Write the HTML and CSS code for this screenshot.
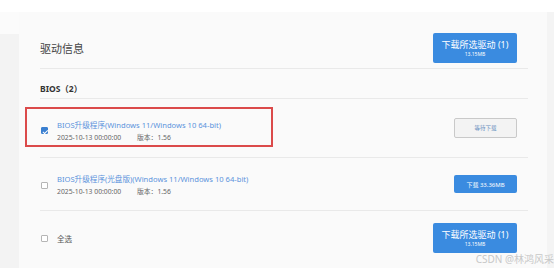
FILE: index.html
```html
<!DOCTYPE html>
<html lang="zh-CN">
<head>
<meta charset="utf-8">
<link rel="stylesheet" href="styles.css">
</head>
<body>
<div class="topbar"></div>
<div class="layout">
  <div class="side"><div class="side-top"></div></div>
  <main class="panel">
    <div class="header">
      <h1 class="title">驱动信息</h1>
      <button class="btn btn-primary btn-big"><span class="big-label">下载所选驱动 (1)</span><span class="big-size">13.15MB</span></button>
    </div>
    <div class="section">BIOS（2）</div>
    <div class="row row1">
      <span class="cb checked"></span>
      <div class="info">
        <a class="name">BIOS升级程序(Windows 11/Windows 10 64-bit)</a>
        <div class="meta"><span class="date">2025-10-13 00:00:00</span><span class="ver">版本：1.56</span></div>
      </div>
      <button class="btn btn-wait">等待下载</button>
    </div>
    <div class="row row2">
      <span class="cb"></span>
      <div class="info">
        <a class="name">BIOS升级程序(光盘版)(Windows 11/Windows 10 64-bit)</a>
        <div class="meta"><span class="date">2025-10-13 00:00:00</span><span class="ver">版本：1.56</span></div>
      </div>
      <button class="btn btn-primary btn-small">下载 33.36MB</button>
    </div>
    <div class="row row3">
      <span class="cb"></span>
      <span class="all">全选</span>
      <button class="btn btn-primary btn-big"><span class="big-label">下载所选驱动 (1)</span><span class="big-size">13.15MB</span></button>
    </div>
    <div class="highlight"></div>
  </main>
  <div class="side-right"></div>
</div>
<div class="watermark">CSDN @林鸿风采</div>
</body>
</html>
```
FILE: styles.css
```css
* { box-sizing: border-box; }
html, body { margin: 0; padding: 0; }
body {
  width: 554px;
  height: 268px;
  overflow: hidden;
  background: #f4f4f4;
  font-family: "Noto Sans", "Noto Sans CJK SC", sans-serif;
  color: #333;
  position: relative;
}
.topbar { height: 12px; background: #ffffff; }
.layout { display: flex; height: 256px; }
.side { width: 19px; background: #f3f3f3; }
.side-top { height: 22px; background: #fbfbfb; }
.side-right { flex: 1; background: #f4f4f4; }
.panel {
  width: 528px;
  background: #fafafa;
  padding: 0 19px 0 21px;
  position: relative;
}
.header {
  display: flex;
  align-items: center;
  justify-content: space-between;
  padding: 21px 11px 5px 0;
  border-bottom: 1px solid #e9e9e9;
}
.title {
  margin: 0;
  font-size: 11px;
  font-weight: normal;
  color: #444;
}
.btn {
  border: none;
  font-family: "Noto Sans", "Noto Sans CJK SC", sans-serif;
  border-radius: 2px;
  padding: 0;
  cursor: pointer;
}
.btn-primary { background: #3a8be0; color: #fff; }
.btn-big {
  width: 84px;
  height: 30px;
  display: flex;
  flex-direction: column;
  align-items: center;
  justify-content: center;
  gap: 1px;
}
.big-label { font-size: 9px; line-height: 11px; }
.big-size { font-size: 5px; line-height: 6px; }
.section {
  height: 30px;
  display: flex;
  align-items: center;
  padding-top: 9px;
  font-size: 8.5px;
  font-weight: bold;
  color: #333;
  border-bottom: 1px solid #e9e9e9;
}
.row {
  display: flex;
  align-items: center;
  padding-right: 11px;
}
.row1 { height: 59px; border-bottom: 1px solid #e9e9e9; }
.row2 { height: 53px; border-bottom: 1px solid #e9e9e9; }
.row3 { height: 54px; }
.row1 .info, .row1 .cb { margin-top: 5px; }
.row2 .info, .row2 .cb { margin-top: 2px; }
.cb {
  width: 7px;
  height: 7px;
  border: 1px solid #b5b5b5;
  background: #fff;
  margin-left: 1px;
  margin-right: 9px;
  border-radius: 1px;
}
.cb.checked {
  background: #3a7fd0;
  border-color: #3a7fd0;
  position: relative;
}
.cb.checked::after {
  content: "";
  position: absolute;
  left: 1.5px;
  top: 0.5px;
  width: 2px;
  height: 3.5px;
  border: solid #fff;
  border-width: 0 1px 1px 0;
  transform: rotate(45deg);
}
.info { flex: 1; display: flex; flex-direction: column; gap: 2px; }
.name { font-size: 7.6px; color: #5b93dc; line-height: 11px; }
.meta { font-size: 6.8px; color: #666; line-height: 9px; display: flex; }
.date { width: 80px; }
.all { flex: 1; font-size: 7.5px; color: #555; }
.btn-wait {
  width: 63px;
  height: 20px;
  background: #f3f3f3;
  border: 1px solid #c9c9c9;
  color: #6a8fc0;
  font-size: 5.5px;
}
.btn-small {
  width: 63px;
  height: 18px;
  font-size: 6px;
}
.highlight {
  position: absolute;
  left: 6px;
  top: 95px;
  width: 248px;
  height: 40px;
  border: 2px solid #db4a4a;
}
.watermark {
  position: absolute;
  right: 0;
  bottom: 2px;
  font-size: 10px;
  color: #c8c8c8;
  font-family: "Noto Sans", "Noto Sans CJK SC", sans-serif;
}
```
